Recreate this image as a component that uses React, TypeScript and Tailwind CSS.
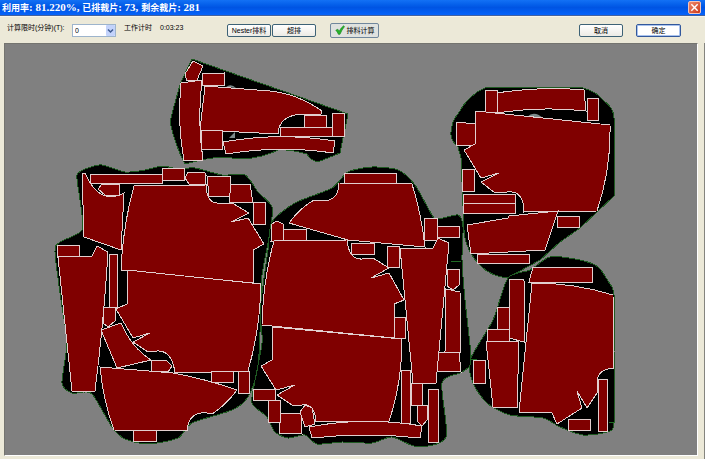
import React from "react";

type Point = [number, number];

const parse = (s: string): Point[] =>
  s.split(" ").map((p) => p.split(",").map(Number) as Point);

// Closed Catmull-Rom curve through the given points
function smooth(s: string): string {
  const p = parse(s);
  const n = p.length;
  let d = `M${p[0][0]},${p[0][1]}`;
  for (let i = 0; i < n; i++) {
    const a = p[(i + n - 1) % n];
    const b = p[i];
    const c = p[(i + 1) % n];
    const e = p[(i + 2) % n];
    d += `C${b[0] + (c[0] - a[0]) / 8},${b[1] + (c[1] - a[1]) / 8} ${c[0] - (e[0] - b[0]) / 8},${c[1] - (e[1] - b[1]) / 8} ${c[0]},${c[1]}`;
  }
  return d + "Z";
}

const hides: string[] = [
  "M192,59L348,114L340,153L318,162Q310,160 307,154Q290,149 278,150Q266,156 252,158Q236,159 223,157Q206,158 185,164Q175,145 170,122Q176,98 181,82Z",
  "M485,88Q535,86 583,88Q597,92 603,100Q614,108 614,118L614,196L580,228L560,242L540,260L507,278Q490,276 480,265Q465,250 464,230L461,158L458,147Q450,140 451,132Q452,120 458,114Q468,95 485,88Z",
  smooth("550,257 580,260 598,267 608,281 614,295 614,355 614,423 607,432 583,435 560,427 543,418 510,415 487,403 473,383 470,360 493,320 508,278 530,270"),
  smooth("77,175 88,168 102,165 125,172 145,170 162,166 178,169 195,168 222,175 245,175 258,192 272,207 270,232 262,275 261,305 258,367 248,397 232,410 192,423 178,438 148,444 125,439 112,427 93,395 84,392 72,393 62,383 67,343 61,300 55,252 60,242 82,230 80,200"),
  smooth("272,222 295,203 332,188 348,172 372,167 398,170 415,185 432,215 438,219 458,215 463,227 462,260 465,300 471,360 462,372 442,383 446,437 418,447 392,437 372,443 342,442 317,444 305,435 288,438 275,432 267,417 255,407 252,397 262,343 260,315 262,293 268,250"),
];

const pieces: string[] = [
  // upper left hide
  "M193,61L203,66L197,80L187,81L185,74Z",
  "M181,83L202,80Q197,120 203,160L184,161Q177,122 181,83Z",
  "M202,74L224,73V85H202Z",
  "M205,86L270,91Q298,94 322,111L321,114H303Q279,115 278,134L200,130Z",
  "M280,127H332V136H280Z",
  "M304,115H326V127H304Z",
  "M332,113H344V136H332Z",
  "M201,130H223L222,150L201,149Z",
  "M223,142Q278,132 335,141L333,153Q280,145 226,154Z",
  // upper right hide
  "M497,93Q540,86 584,90L586,111Q540,106 498,113Z",
  "M486,90H497L498,113L485,112Z",
  "M587,98H598V120H587Z",
  "M456,122L475,124V145L456,146Z",
  "M476,111L610,125Q611,170 597,211L524,212Q524,190 507,192L495,193L481,182L499,173L481,178L464,150L475,144Z",
  "M462,169H474V191H462Z",
  "M463,194H515V203H463Z",
  "M463,203H515V213H463Z",
  "M467,225L508,218L509,216L558,211L545,250L471,254Z",
  "M557,216H579V227H557Z",
  "M477,254H529V263H477Z",
  // lower right hide
  "M533,267H592V282H529Z",
  "M509,279H523L524,281V342L509,338Z",
  "M497,307H509V329H497Z",
  "M487,329H509V341H487Z",
  "M486,341H519L517,408L493,407Z",
  "M473,360H485V383H473Z",
  "M532,283Q575,283 613,295L614,368Q599,369 597,380V393L587,408L577,391L582,408L557,424L552,413L519,412Z",
  "M598,379H607V431H598Z",
  "M568,419H590V430H568Z",
  // left hide
  "M82,173H85Q99,206 124,193L121,250L84,237Z",
  "M90,174H162V183H90Z",
  "M162,168H184V180H162Z",
  "M102,184H119V195H105L98,189Z",
  "M188,172L205,173L206,184H189L185,178Z",
  "M207,176L231,177L230,196H209Z",
  "M231,184H250L253,203L229,202Z",
  "M253,202H265V224H253Z",
  "M134,186L206,185Q207,203 217,203H232L249,213L231,222L248,218L264,244L253,250V283L121,270Q123,225 134,186Z",
  "M127,270L261,284Q260,330 248,371L175,373Q172,350 157,351L148,352L133,342L150,333L133,338L116,309L127,304Z",
  "M57,245H79V257H57Z",
  "M58,257L92,256L97,246L108,252Q104,320 95,391H72Z",
  "M109,254H117V307H109Z",
  "M103,307H115V321L108,327L103,323Z",
  "M101,330L121,323Q132,348 151,360L117,368Z",
  "M151,361L166,360L172,366L168,372L151,371Z",
  "M100,367L173,373Q206,379 237,390Q226,405 212,414Q189,408 187,431L114,430Q103,400 100,367Z",
  "M133,430H156V441H133Z",
  "M211,371H233V382H211Z",
  "M238,371H249V393H238Z",
  // centre hide
  "M344,173H396V183H344Z",
  "M339,183L412,184Q421,212 425,247L348,240L289,223Q300,208 314,200Q339,205 339,183Z",
  "M272,224L277,221L283,224V241H271Z",
  "M283,229H306V241H283Z",
  "M424,218H437V240H424Z",
  "M437,226H459V237H437Z",
  "M274,241L347,240Q349,260 362,259L373,258L389,268L371,278L389,273L404,300L394,304V338L262,325Q263,280 274,241Z",
  "M351,243H374V254H351Z",
  "M387,246H399V267H387Z",
  "M273,327L402,339Q402,383 389,421L316,422Q315,403 302,405H292L277,395L295,385L276,390L261,366L272,360Z",
  "M394,317H405V338H394Z",
  "M400,248H433L438,238L449,243L436,383H413Z",
  "M447,269H459V285L453,290L447,286Z",
  "M446,289L460,292L461,352H445Z",
  "M439,352H459L461,372L437,371Z",
  "M253,389H275V400H253Z",
  "M268,400H280V422H268Z",
  "M281,413H301L302,434L279,433Z",
  "M305,405L312,408L315,424L305,427L300,412Z",
  "M309,427Q365,416 422,426L420,438Q365,432 312,438Z",
  "M401,370H410V423H401Z",
  "M411,383H422V405H411Z",
  "M417,405H427V420L422,426L417,421Z",
  "M428,389H438V442H428Z",
];

function NestingCanvas() {
  return (
    <svg
      className="block h-full w-full"
      viewBox="5 44 692 411"
      preserveAspectRatio="xMinYMin meet"
      role="img"
      aria-label="排料"
    >
      <g fill="#000" stroke="#1f5a22" strokeWidth="1" shapeRendering="crispEdges">
        {hides.map((d, i) => (
          <path key={i} d={d} />
        ))}
      </g>
      <g fill="#7d8b8c">
        <path d="M226,87Q231,83 236,88Z" />
        <path d="M527,117Q534,110 543,118Z" />
        <path d="M229,138L235,132V138Z" />
      </g>
      <path d="M451,261.5H461M609,422.5H615M470,359.5H477" stroke="#1f6a22" fill="none" />
      <g
        fill="#800000"
        stroke="#e2cfcf"
        strokeWidth="1"
        shapeRendering="crispEdges"
      >
        {pieces.map((d, i) => (
          <path key={i} d={d} />
        ))}
      </g>
    </svg>
  );
}

function Cjk({ children }: { children: React.ReactNode }) {
  return <span className="text-[9px]">{children}</span>;
}

const button =
  "flex h-[13px] w-11 items-center justify-center whitespace-nowrap rounded-xs border border-[#3d6276] bg-linear-to-b from-white to-[#ecebe5] text-[7px] leading-none text-black";

export default function App() {
  return (
    <div className="flex h-screen flex-col overflow-hidden bg-[#ece9d8] font-['Liberation_Sans','Noto_Sans_CJK_SC',sans-serif] text-[7px] text-black">
      <header className="flex h-4 shrink-0 items-center justify-between border-b border-[#45629e] bg-linear-to-b from-[#1371f5] via-[#0054e3] to-[#0663fa] pr-1 pl-0.5">
        <h1 className="font-['Liberation_Serif','Noto_Sans_CJK_SC',serif] text-[11px] leading-none font-bold whitespace-nowrap text-white">
          <Cjk>利用率</Cjk>: 81.220%, <Cjk>已排裁片</Cjk>: 73, <Cjk>剩余裁片</Cjk>: 281
        </h1>
        <button
          aria-label="关闭"
          className="flex size-[13px] items-center justify-center rounded-xs border border-[#f3c4bb] bg-linear-to-br from-[#ee8a6c] to-[#cc3513]"
        >
          <svg viewBox="0 0 10 10" className="size-[9px]" stroke="#fff" strokeWidth="1.6" fill="none">
            <path d="M1.5 1.5L8.5 8.5M8.5 1.5L1.5 8.5" />
          </svg>
        </button>
      </header>

      <div className="flex h-[27px] shrink-0 items-center border-t border-[#f7f5ec] pr-6 pl-[7px]">
        <div className="flex w-[220px] items-center">
          <label htmlFor="limit" className="w-[65px] pb-1 whitespace-nowrap">
            计算限时(分钟)(T):
          </label>
          <div className="relative">
            <select
              id="limit"
              className="block h-[13px] w-11 appearance-none border border-[#9db4cc] bg-white pl-0.5 text-[7px] leading-none"
            >
              <option>0</option>
            </select>
            <svg viewBox="0 0 9 11" className="pointer-events-none absolute top-px right-px h-[11px] w-[9px]">
              <rect width="9" height="11" rx="1" fill="#c3d3fb" />
              <path d="M2 4.5L4.5 7L7 4.5" fill="none" stroke="#3f5c92" strokeWidth="1.5" />
            </svg>
          </div>
          <span className="ml-2 pb-1 whitespace-nowrap">工作计时</span>
          <output className="ml-2 pb-1 whitespace-nowrap">0:03:23</output>
        </div>
        <button className={button}>Nester排料</button>
        <button className={button + " ml-px"}>超排</button>
        <button className="ml-[14px] flex h-[15px] w-[49px] items-center justify-center gap-0.5 rounded-xs border border-[#70879c] bg-[#dfe2df] text-[7px] leading-none whitespace-nowrap">
          <svg viewBox="0 0 10 10" className="size-[10px]">
            <path d="M0.8 5.2L2.8 4.2L4.2 6.2Q6 2.6 8.6 0.8L9.5 1.6Q6.8 4.8 5 9.3H3.4Q2.4 6.8 0.8 5.2Z" fill="#27b52b" stroke="#13801a" strokeWidth="0.6" />
          </svg>
          排料计算
        </button>
        <button className={button + " ml-auto"}>取消</button>
        <button className="ml-[13px] flex h-[13px] w-[45px] items-center justify-center rounded-xs border border-[#32589c] bg-white text-[7px] leading-none inset-ring inset-ring-[#a9c3ee]">
          确定
        </button>
      </div>

      <main className="flex min-h-0 flex-1 border-r border-[#85857f] pr-1.5 pb-[3px] pl-1">
        <div className="min-w-0 flex-1 border-t border-r border-b border-l border-t-[#74746f] border-r-white border-b-white border-l-[#74746f] bg-[#808080]">
          <NestingCanvas />
        </div>
      </main>
    </div>
  );
}
